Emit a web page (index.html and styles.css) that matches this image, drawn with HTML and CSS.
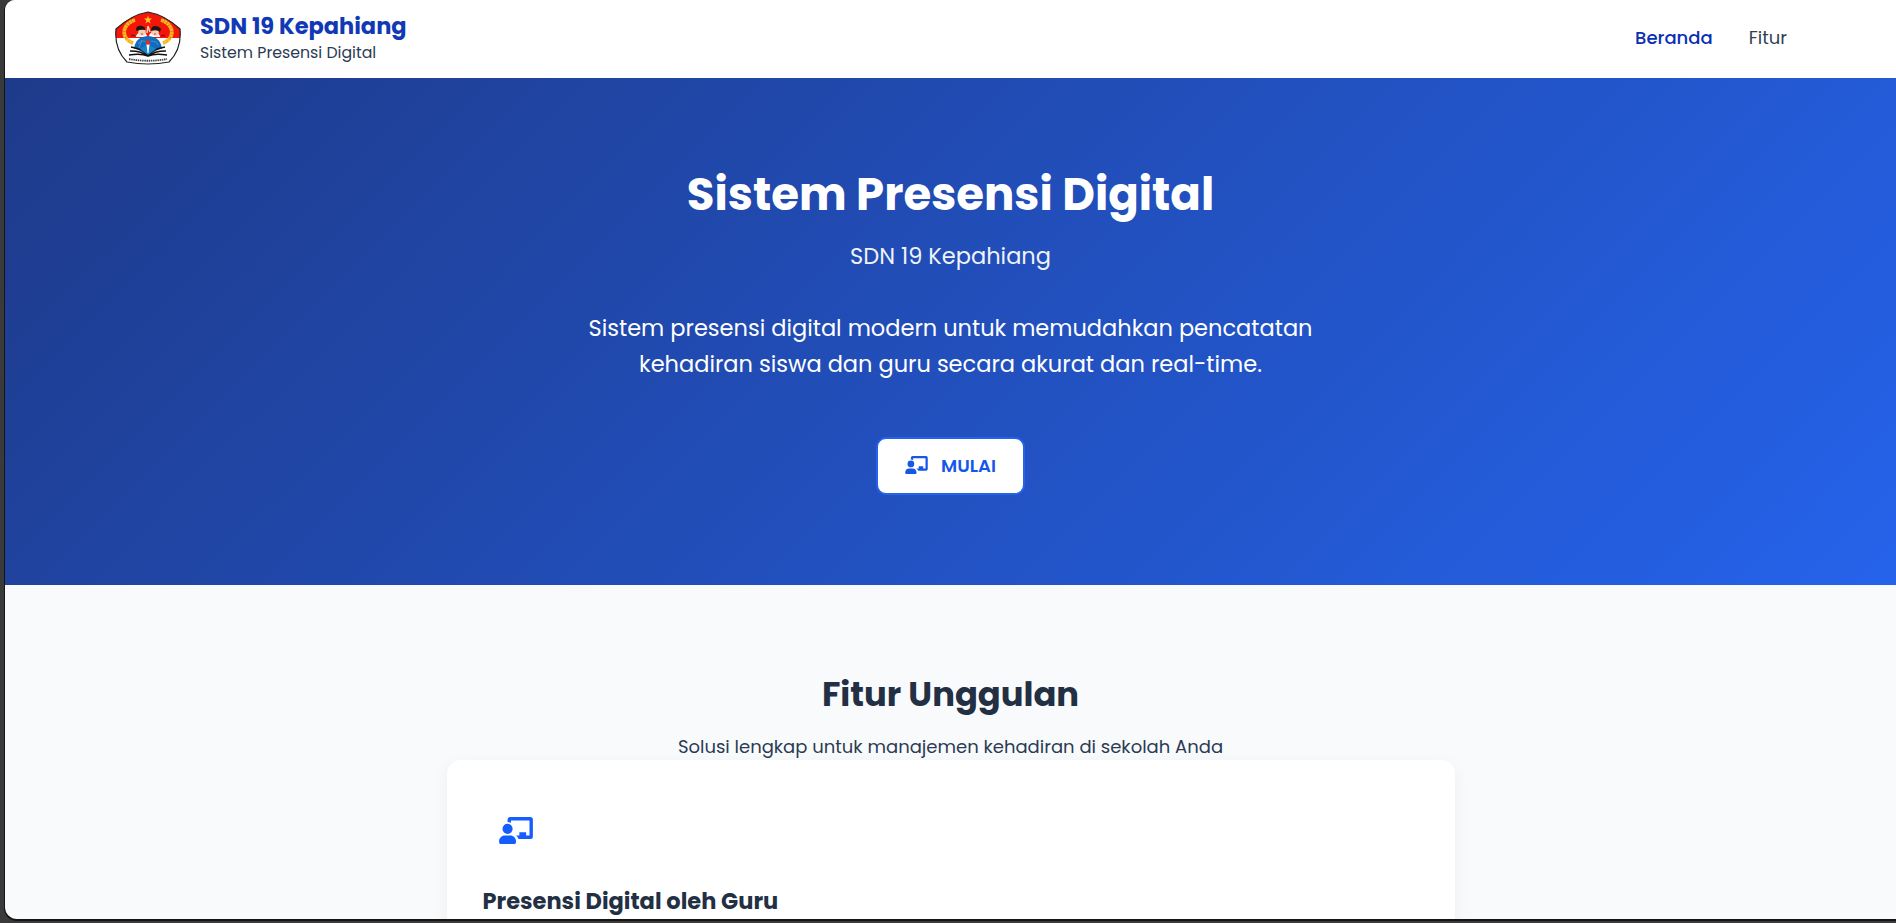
FILE: index.html
```html
<!DOCTYPE html>
<html lang="id">
<head>
<meta charset="utf-8">
<title>SDN 19 Kepahiang</title>
<link rel="stylesheet" href="styles.css">
</head>
<body>
<div class="page">
  <header class="header">
    <a class="brand">
      <svg class="logo" viewBox="0 0 66 54">
        <defs><clipPath id="shield"><path d="M33 1 Q50 4 65 18 Q67 38 54 51 Q33 55 12 51 Q-1 38 1 18 Q16 4 33 1Z"/></clipPath></defs>
        <g clip-path="url(#shield)">
          <path fill="#fff" d="M0 0h66v54H0z"/>
          <path fill="#f5160b" d="M0 0h66v27H0z"/>
        </g>
        <path d="M20 9C7 13 5 27 18 32M46 9c13 4 15 18 2 23" fill="none" stroke="#f6b51c" stroke-width="3.800" stroke-dasharray="3 .3"/>
        <path fill="#ffc91f" d="m33 4.500 1 3h3l-2.400 2 1 3-2.600-1.800-2.600 1.800 1-3-2.400-2h3z"/>
        <path fill="#fff" d="M21 25q2-4 6-4t5 4v1H21zM34 25q1-4 5-4t6 4v1H34z"/>
        <circle cx="27" cy="21" r="3.800" fill="#f7cdb0"/><circle cx="40" cy="21" r="3.800" fill="#f7cdb0"/>
        <path fill="#25140f" d="M21 19q0-5 6-4 4 1 3 4-4-1-8 1zM36 20q0-5 4-5t6 3l-1 3q-3-3-9-1z"/>
        <path d="M32 22l1-7M33 15l2 6" stroke="#f7cdb0" stroke-width="1.500"/>
        <path d="M26 23h2M39 23h2" stroke="#b34a32"/>
        <path fill="#136bb9" d="M19 40q0-14 14-15 14 1 14 15l-14 4z"/>
        <path d="M23 33q5-5 8-2M36 30q6 0 7 4M27 29l-3 8" fill="none" stroke="#4aa0dc" stroke-width=".8"/>
        <path fill="#fff" d="M14 37q13 1 19 7 6-6 19-7v8q-12-3-19 0-7-3-19 0z"/>
        <path d="M16 36q11 2 17 8 6-6 17-8M15 40q12 0 18 5 6-5 18-5M14 44q12-2 19 1 7-3 19-1" fill="none" stroke="#111" stroke-width="1.500"/>
        <path fill="#1683d0" d="M25 38l8-5 8 5-8 6z"/>
        <path fill="#fff" d="M31.500 33h3l-1 9h-1z"/><path fill="#ee2c1d" d="M33 28q4 4 0 6-4-2 0-6z"/>
        <path d="M14 48q19 3.500 38 0" fill="none" stroke="#444" stroke-width="1.800" stroke-dasharray="1.500 .7"/>
        <path d="M16 24.500h4M46 24.500h4" stroke="#811" stroke-width="1.500"/>
        <path d="M33 1 Q50 4 65 18 Q67 38 54 51 Q33 55 12 51 Q-1 38 1 18 Q16 4 33 1Z" fill="none" stroke="#252020" stroke-width="1.200"/>
      </svg>
      <span class="brand-text">
        <span class="brand-name">SDN 19 Kepahiang</span>
        <span class="brand-sub">Sistem Presensi Digital</span>
      </span>
    </a>
    <nav class="nav">
      <a class="nav-link active">Beranda</a>
      <a class="nav-link">Fitur</a>
    </nav>
  </header>
  <section class="hero">
    <h1 class="hero-title">Sistem Presensi Digital</h1>
    <p class="hero-school">SDN 19 Kepahiang</p>
    <p class="hero-lead">Sistem presensi digital modern untuk memudahkan pencatatan<br>kehadiran siswa dan guru secara akurat dan real-time.</p>
    <a class="button">
      <svg class="button-icon" viewBox="0 0 640 512"><path fill="currentColor" d="M160 96V48q0-48 48-48h384q48 0 48 48v320q0 48-48 48H370q-18-38-48-64h62v-64h128v64h64V64H224v49q-30-17-64-17zm0 32a96 96 0 1 1 0 192 96 96 0 1 1 0-192m-53 224h106c59 0 107 48 107 107v26q0 27-27 27H27q-27 0-27-27v-26c0-59 48-107 107-107z"/></svg>
      <span>MULAI</span>
    </a>
  </section>
  <main class="features">
    <h2 class="features-title">Fitur Unggulan</h2>
    <p class="features-sub">Solusi lengkap untuk manajemen kehadiran di sekolah Anda</p>
    <article class="card">
      <svg class="card-icon" viewBox="0 0 640 512"><path fill="currentColor" d="M160 96V48q0-48 48-48h384q48 0 48 48v320q0 48-48 48H370q-18-38-48-64h62v-64h128v64h64V64H224v49q-30-17-64-17zm0 32a96 96 0 1 1 0 192 96 96 0 1 1 0-192m-53 224h106c59 0 107 48 107 107v26q0 27-27 27H27q-27 0-27-27v-26c0-59 48-107 107-107z"/></svg>
      <h3 class="card-title">Presensi Digital oleh Guru</h3>
    </article>
  </main>
</div>
</body>
</html>
```
FILE: styles.css
```css
* { box-sizing: border-box; margin: 0; padding: 0; }
body {
  height: 923px;
  padding: 0 0 4px 5px;
  overflow: hidden;
  background: #3a3a3b;
  font-family: Poppins, Inter, sans-serif;
  color: #233044;
}
.page {
  height: 919px;
  overflow: hidden;
  border-radius: 10px 0 0 12px;
  background: #f8fafc;
  box-shadow: 0 1px 0 1px #151515;
}
.header {
  display: flex;
  align-items: flex-start;
  justify-content: space-between;
  height: 78px;
  padding: 0 109px 0 110px;
  background: #fff;
}
.brand { display: flex; gap: 19px; }
.logo { width: 66px; height: 54px; margin-top: 11px; }
.brand-text { display: flex; flex-direction: column; padding-top: 11px; }
.brand-name { font-size: 22.500px; line-height: 30px; font-weight: 700; color: #1239b5; }
.brand-sub { font-size: 15.750px; line-height: 24px; color: #2b3b52; }
.nav { display: flex; gap: 36px; padding-top: 23px; font-size: 18px; line-height: 30px; }
.nav-link { color: #334155; }
.nav-link.active { color: #0a2fb5; font-weight: 500; }
.hero {
  display: flex;
  flex-direction: column;
  align-items: center;
  height: 507px;
  padding-top: 83px;
  background: linear-gradient(135deg, #1e3a8a 0%, #2563eb 100%);
  color: #fff;
  text-align: center;
}
.hero-title { font-size: 45px; line-height: 68px; font-weight: 700; }
.hero-school { margin-top: 9px; font-size: 22.500px; line-height: 36px; opacity: .93; }
.hero-lead { margin-top: 36px; font-size: 22.500px; line-height: 36px; white-space: nowrap; }
.button {
  display: flex;
  align-items: center;
  gap: 13px;
  width: 149px;
  height: 58px;
  margin-top: 55px;
  padding: 0 0 2px 27px;
  border: 2px solid #2563eb;
  border-radius: 10px;
  background: #fff;
  color: #1558e8;
  font-size: 18px;
  font-weight: 600;
}
.button-icon { width: 23px; height: 18px; }
.features { display: flex; flex-direction: column; align-items: center; padding-top: 85px; }
.features-title { font-size: 33.750px; line-height: 50px; font-weight: 700; }
.features-sub { margin-top: 13px; font-size: 18px; line-height: 27px; color: #2b3b52; }
.card {
  width: 1008px;
  height: 300px;
  padding: 57px 36px 0;
  border-radius: 14px;
  background: #fff;
  box-shadow: 0 4px 16px rgba(15, 23, 42, .05);
}
.card-icon { display: block; width: 34px; height: 27px; margin-left: 16px; color: #155dfc; }
.card-title { margin-top: 41px; font-size: 22.500px; line-height: 32px; font-weight: 700; }
```
